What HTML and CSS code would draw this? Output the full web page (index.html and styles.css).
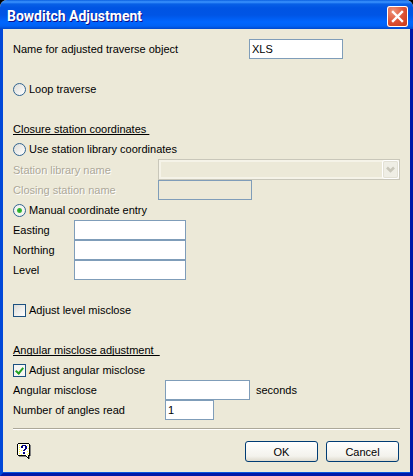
FILE: index.html
```html
<!DOCTYPE html>
<html lang="en">
<head>
  <meta charset="UTF-8">
  <meta name="viewport" content="width=device-width, initial-scale=1.0">
  <title>Bowditch Adjustment</title>
  <link rel="stylesheet" href="styles.css">
</head>
<body>
  <div class="window">
    <header class="titlebar">
      <h1>Bowditch Adjustment</h1>
      <button type="button" class="close" aria-label="Close">
        <svg width="21" height="21" viewBox="0 0 21 21">
          <path d="M6 6l9 9M15 6l-9 9" stroke="#fff" stroke-width="2.4" stroke-linecap="square"/>
        </svg>
      </button>
    </header>

    <form class="content" action="#" method="post">
      <div class="row">
        <label class="name-label" for="objectName">Name for adjusted traverse object</label>
        <input type="text" class="medium" id="objectName" name="objectName" value="XLS">
      </div>

      <div class="section">
        <div class="row">
          <input type="radio" id="loopTraverse" name="closure">
          <label for="loopTraverse">Loop traverse</label>
        </div>
      </div>

      <div class="section">
        <h2>Closure station coordinates </h2>
        <div class="row">
          <input type="radio" id="useLibrary" name="closure">
          <label for="useLibrary">Use station library coordinates</label>
        </div>
        <div class="row disabled">
          <label class="station-label" for="stationLibrary">Station library name</label>
          <div class="combo">
            <select id="stationLibrary" name="stationLibrary" disabled></select>
            <svg class="arrow" width="15" height="17" viewBox="0 0 15 17">
              <path d="M4 6.5l3.5 3.5 3.5-3.5" fill="none" stroke="#c9c7ba" stroke-width="2.6"/>
            </svg>
          </div>
        </div>
        <div class="row disabled">
          <label class="station-label" for="closingStation">Closing station name</label>
          <input type="text" class="medium" id="closingStation" name="closingStation" disabled>
        </div>
        <div class="row">
          <input type="radio" id="manualEntry" name="closure" checked>
          <label for="manualEntry">Manual coordinate entry</label>
        </div>
        <div class="row">
          <label class="coord-label" for="easting">Easting</label>
          <input type="text" class="coord" id="easting" name="easting">
        </div>
        <div class="row">
          <label class="coord-label" for="northing">Northing</label>
          <input type="text" class="coord" id="northing" name="northing">
        </div>
        <div class="row">
          <label class="coord-label" for="level">Level</label>
          <input type="text" class="coord" id="level" name="level">
        </div>
      </div>

      <div class="section">
        <div class="row">
          <input type="checkbox" id="adjustLevel" name="adjustLevel">
          <label for="adjustLevel">Adjust level misclose</label>
        </div>
      </div>

      <div class="section">
        <h2>Angular misclose adjustment  </h2>
        <div class="row">
          <input type="checkbox" id="adjustAngular" name="adjustAngular" checked>
          <label for="adjustAngular">Adjust angular misclose</label>
        </div>
        <div class="row">
          <label class="angle-label" for="angularMisclose">Angular misclose</label>
          <input type="text" class="angle" id="angularMisclose" name="angularMisclose">
          <span class="unit">seconds</span>
        </div>
        <div class="row">
          <label class="angle-label" for="angleCount">Number of angles read</label>
          <input type="text" class="count" id="angleCount" name="angleCount" value="1">
        </div>
      </div>

      <footer class="footer">
        <button type="button" class="help" aria-label="Help">
          <svg width="15" height="17" viewBox="0 0 15 17">
            <path d="M1 1h11v12h-1v3l-3-3h-7z" fill="#fff"/>
            <path d="M2 2h1v1h-1zM4 2h1v1h-1zM10 2h1v1h-1zM2 4h1v1h-1zM11 5h1v1h-1zM2 6h1v1h-1zM4 7h1v1h-1zM10 8h1v1h-1zM2 8h1v1h-1zM11 10h1v1h-1zM2 10h1v1h-1zM4 11h1v1h-1zM10 11h1v1h-1z" fill="#ffff40"/>
            <path d="M1 0h11v1h-11zM0 1h1v11h-1zM1 12h8v1h-8zM12 1h1v12h-1zM9 13h1v1h-1zM10 14h1v1h-1zM11 12h1v4h-1z" fill="#000"/>
            <path d="M13 2h1v11h-1zM2 13h7v1h-7zM12 13h1v3h-1z" fill="#808080"/>
            <path d="M5 2h4v1h-4zM4 3h2v2h-2zM8 3h2v3h-2zM7 6h2v1h-2zM6 7h2v1h-2zM6 9h2v2h-2z" fill="#00007f"/>
          </svg>
        </button>
        <button type="submit" class="push">OK</button>
        <button type="button" class="push">Cancel</button>
      </footer>
    </form>
  </div>
</body>
</html>
```
FILE: styles.css
```css
* {
  box-sizing: border-box;
}

body {
  margin: 0;
  background: #000;
  color: #000;
  font: 11px/20px "Liberation Sans", Arial, sans-serif;
}

.window {
  display: flex;
  flex-direction: column;
  min-height: 100vh;
  border-radius: 7px 7px 0 0;
  overflow: hidden;
  background: #ece9d8;
}

/* Title bar */
.titlebar {
  display: flex;
  align-items: center;
  justify-content: space-between;
  height: 29px;
  padding: 3px 5px 0 7px;
  background: linear-gradient(#0a5fe0 0, #3d95ff 2px, #0860e6 4px, #0054e3 8px, #0055e5 15px, #0066ff 22px, #0062f5 26px, #0048cc 29px);
}

.titlebar h1 {
  margin: 0;
  color: #fff;
  font: bold 14px/20px Roboto, "Liberation Sans", sans-serif;
  text-shadow: 1px 1px 0 #0f1089;
}

.close {
  width: 21px;
  height: 21px;
  padding: 0;
  border: 0;
  border-radius: 3px;
  box-shadow: inset 0 0 0 1px #fff;
  background: radial-gradient(circle at 30% 25%, #ee9379, #dd5234 50%, #c53310);
}

.close svg {
  display: block;
}

.content {
  flex: 1;
  padding: 10px 10px 8px;
  border: solid #0148d8;
  border-width: 0 3px 3px;
  border-right-color: #0019a8;
  border-bottom-color: #0019a8;
  box-shadow: inset 0 -1px 0 #0855dd;
}

.row {
  display: flex;
  align-items: center;
}

.section {
  margin-top: 20px;
}

h2 {
  margin: 0;
  font: inherit;
  white-space: pre;
  text-decoration: underline;
  text-decoration-skip-ink: none;
}

/* Label columns */
.name-label {
  width: 236px;
}

.station-label {
  width: 145px;
}

.coord-label {
  width: 61px;
}

.angle-label {
  width: 152px;
}

.unit {
  margin-left: 6px;
}

.disabled label {
  color: #aca899;
  text-shadow: 1px 1px 0 #fff;
}

/* Fields */
input[type="text"] {
  height: 20px;
  margin: 0;
  padding: 0 2px;
  border: 1px solid #7f9db9;
  background: #fff;
  color: #000;
  font: inherit;
}

input[type="text"]:disabled {
  background: #ece9d8;
}

input.medium {
  width: 94px;
}

input.coord {
  width: 112px;
}

input.angle {
  width: 85px;
}

input.count {
  width: 49px;
}

input[type="radio"],
input[type="checkbox"] {
  appearance: none;
  width: 13px;
  height: 13px;
  margin: 0 3px 0 0;
  border: 1px solid #1c5180;
  background: linear-gradient(135deg, #dcdcd7, #fff);
}

input[type="radio"] {
  border-color: #316490;
  border-radius: 50%;
}

input[type="radio"]:checked {
  background: radial-gradient(circle, #21a121 0, #3cbc3c 2px, #f4f4f0 3px);
}

input[type="checkbox"]:checked {
  background: #f6f6f3;
}

input[type="checkbox"]:checked::before {
  content: "";
  display: block;
  box-sizing: border-box;
  width: 5px;
  height: 8px;
  margin: 1px 0 0 3px;
  border: solid #21a121;
  border-width: 0 2px 2px 0;
  transform: rotate(40deg);
}

.combo {
  position: relative;
  flex: 1;
  height: 21px;
}

.combo select {
  appearance: none;
  display: block;
  width: 100%;
  height: 21px;
  border: 1px solid #c9c7ba;
  border-radius: 0;
  box-shadow: inset 0 0 0 2px #f5f3e8;
  background: #ece9d8;
  opacity: 1;
}

.arrow {
  position: absolute;
  top: 2px;
  right: 2px;
  border-radius: 2px;
  box-shadow: 0 0 0 1px #fff, inset 0 0 0 1px #e3e1d5;
  background: #efeee5;
}

/* Buttons */
.footer {
  display: flex;
  align-items: center;
  gap: 8px;
  margin-top: 8px;
  padding: 11px 1px 0 0;
  border-top: 1px solid #aca899;
  box-shadow: inset 0 1px 0 #fff;
}

.help {
  margin: 0 auto 0 4px;
  padding: 0;
  border: 0;
  background: none;
}

.help svg {
  display: block;
}

.push {
  width: 73px;
  height: 21px;
  margin-top: 1px;
  padding: 0;
  border: 1px solid #003c74;
  border-radius: 3px;
  background: linear-gradient(#fff, #f3f2ec 75%, #dedacd);
  color: #000;
  font: inherit;
  line-height: 18px;
}
```
